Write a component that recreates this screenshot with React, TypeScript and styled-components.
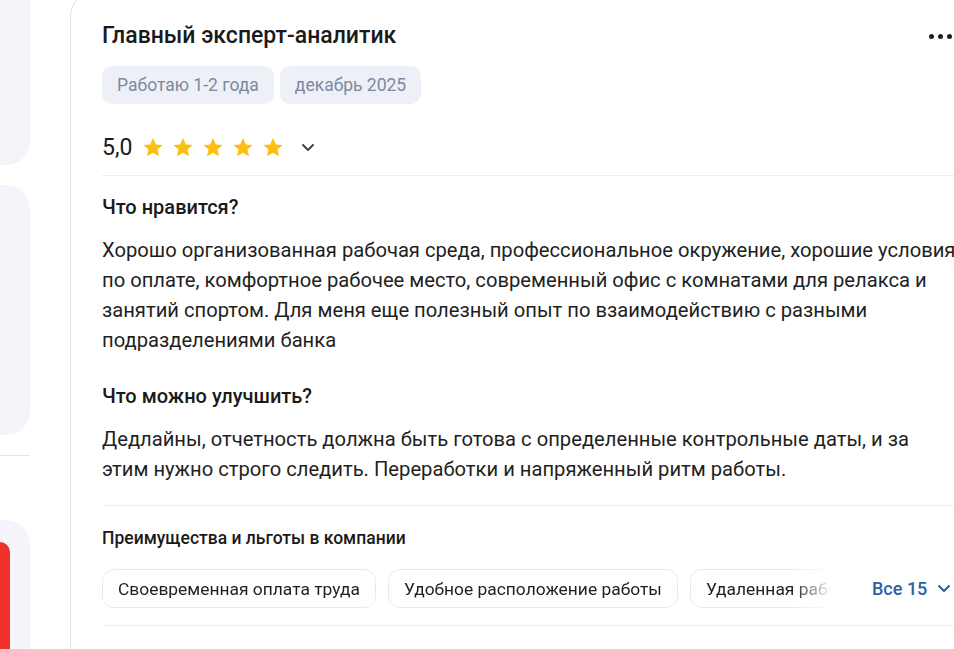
import React from "react";
import styled, { createGlobalStyle } from "styled-components";

const GlobalStyle = createGlobalStyle`
  body {
    margin: 0;
    background: #fff;
    overflow: hidden;
    font-family: Roboto, "Noto Sans", Arial, sans-serif;
    color: #1a1a1a;
  }
`;

const Page = styled.div`
  display: flex;
  gap: 40px;
  width: 954px;
  height: 649px;
  overflow: hidden;
`;

const Sidebar = styled.div`
  width: 30px;
  flex-shrink: 0;
  display: flex;
  flex-direction: column;
`;

const Panel = styled.div<{ $h: number; $top?: boolean }>`
  height: ${(p) => p.$h}px;
  background: #f4f5fa;
  border-radius: ${(p) => (p.$top ? "0 0 24px 0" : "0 24px 24px 0")};
  flex-shrink: 0;
  margin-top: ${(p) => (p.$top ? 0 : 20)}px;
`;

const SideRule = styled.div`
  height: 1px;
  background: #e4e6ea;
  margin: 20px 0 0;
`;

const PromoPanel = styled.div`
  margin-top: 64px;
  flex: 1;
  background: #f4f5fa;
  border-radius: 0 24px 0 0;
  padding-top: 22px;
`;

const PromoRed = styled.div`
  width: 10px;
  height: 100%;
  background: #f0302a;
  border-radius: 0 10px 0 0;
`;

const Card = styled.div`
  width: 919px;
  flex-shrink: 0;
  margin-top: -8px;
  border: 1px solid #dfe3ea;
  border-radius: 24px;
  padding: 29px 32px 60px 31px;
  box-sizing: border-box;
  align-self: flex-start;
`;

const TitleRow = styled.div`
  display: flex;
  align-items: center;
  justify-content: space-between;
`;

const Title = styled.h2`
  margin: 0;
  font-size: 23px;
  line-height: 28px;
  font-weight: 500;
  color: #1a1a1a;
`;

const Dots = styled.div`
  display: flex;
  gap: 4px;
  margin-right: 4px;
  span {
    width: 5px;
    height: 5px;
    border-radius: 50%;
    background: #1f1f1f;
  }
`;

const Tags = styled.div`
  display: flex;
  gap: 6px;
  margin-top: 16px;
`;

const Tag = styled.span`
  height: 38px;
  display: inline-flex;
  align-items: center;
  padding: 0 15px;
  border-radius: 10px;
  background: #edf0f7;
  color: #7b8aa1;
  font-size: 17.5px;
`;

const RatingRow = styled.div`
  display: flex;
  align-items: center;
  height: 28px;
  margin-top: 29px;
`;

const Score = styled.span`
  font-size: 23px;
  font-weight: 400;
  margin-right: 10px;
`;

const Stars = styled.div`
  display: flex;
  gap: 8px;
`;

const Chevron = styled.svg<{ $color: string }>`
  stroke: ${(p) => p.$color};
  fill: none;
  stroke-width: 2;
  stroke-linecap: round;
  stroke-linejoin: round;
`;

const Rule = styled.div<{ $top: number }>`
  height: 1px;
  background: #eceef2;
  margin-top: ${(p) => p.$top}px;
`;

const Section = styled.section<{ $top: number }>`
  margin-top: ${(p) => p.$top}px;
`;

const Heading = styled.h3`
  margin: 0 0 15px;
  font-size: 20px;
  line-height: 26px;
  font-weight: 500;
`;

const Text = styled.p`
  margin: 0;
  font-size: 20.2px;
  line-height: 30px;
  color: #1f1f1f;
`;

const PerksTitle = styled.h4`
  margin: 20px 0 0;
  font-size: 17.5px;
  line-height: 24px;
  font-weight: 500;
`;

const PerksRow = styled.div`
  display: flex;
  align-items: center;
  margin-top: 19px;
`;

const Chips = styled.div`
  display: flex;
  gap: 12px;
  width: 740px;
  overflow: hidden;
  mask-image: linear-gradient(to right, #000 690px, transparent 730px);
  -webkit-mask-image: linear-gradient(to right, #000 690px, transparent 730px);
`;

const Chip = styled.span`
  flex-shrink: 0;
  height: 39px;
  box-sizing: border-box;
  display: inline-flex;
  align-items: center;
  padding: 0 15px;
  border: 1px solid #e6e9f0;
  border-radius: 12px;
  font-size: 17.4px;
  color: #1f1f1f;
  white-space: nowrap;
`;

const MoreLink = styled.a`
  margin-left: 30px;
  display: inline-flex;
  align-items: center;
  gap: 10px;
  color: #2f5fa3;
  font-size: 18px;
  font-weight: 500;
  white-space: nowrap;
  cursor: pointer;
`;

const Star = () => (
  <svg width="22" height="21" viewBox="0 0 24 23">
    <path
      d="M12 1.2l3.1 6.9 7.4.7-5.6 5 1.7 7.4L12 17.3l-6.6 3.9 1.7-7.4-5.6-5 7.4-.7z"
      fill="#fdbf0f"
    />
  </svg>
);

const perks = [
  "Своевременная оплата труда",
  "Удобное расположение работы",
  "Удаленная работа",
];

const App: React.FC = () => {
  return (
    <>
      <GlobalStyle />
      <Page>
        <Sidebar>
          <Panel $h={165} $top />
          <Panel $h={250} />
          <SideRule />
          <PromoPanel>
            <PromoRed />
          </PromoPanel>
        </Sidebar>

        <Card>
          <TitleRow>
            <Title>Главный эксперт-аналитик</Title>
            <Dots>
              <span />
              <span />
              <span />
            </Dots>
          </TitleRow>

          <Tags>
            <Tag>Работаю 1-2 года</Tag>
            <Tag>декабрь 2025</Tag>
          </Tags>

          <RatingRow>
            <Score>5,0</Score>
            <Stars>
              {[0, 1, 2, 3, 4].map((i) => (
                <Star key={i} />
              ))}
            </Stars>
            <Chevron
              $color="#444"
              width="14"
              height="9"
              viewBox="0 0 14 9"
              style={{ marginLeft: 17 }}
            >
              <path d="M2 2l5 5 5-5" />
            </Chevron>
          </RatingRow>

          <Rule $top={14} />

          <Section $top={18}>
            <Heading>Что нравится?</Heading>
            <Text>
              Хорошо организованная рабочая среда, профессиональное окружение,
              хорошие условия по оплате, комфортное рабочее место, современный
              офис с комнатами для релакса и занятий спортом. Для меня еще
              полезный опыт по взаимодействию с разными подразделениями банка
            </Text>
          </Section>

          <Section $top={28}>
            <Heading>Что можно улучшить?</Heading>
            <Text>
              Дедлайны, отчетность должна быть готова с определенные
              контрольные даты, и за этим нужно строго следить. Переработки и
              напряженный ритм работы.
            </Text>
          </Section>

          <Rule $top={21} />

          <PerksTitle>Преимущества и льготы в компании</PerksTitle>

          <PerksRow>
            <Chips>
              {perks.map((p) => (
                <Chip key={p}>{p}</Chip>
              ))}
            </Chips>
            <MoreLink>
              Все 15
              <Chevron $color="#2f5fa3" width="14" height="9" viewBox="0 0 14 9">
                <path d="M2 2l5 5 5-5" />
              </Chevron>
            </MoreLink>
          </PerksRow>

          <Rule $top={17} />
        </Card>
      </Page>
    </>
  );
};

export default App;
